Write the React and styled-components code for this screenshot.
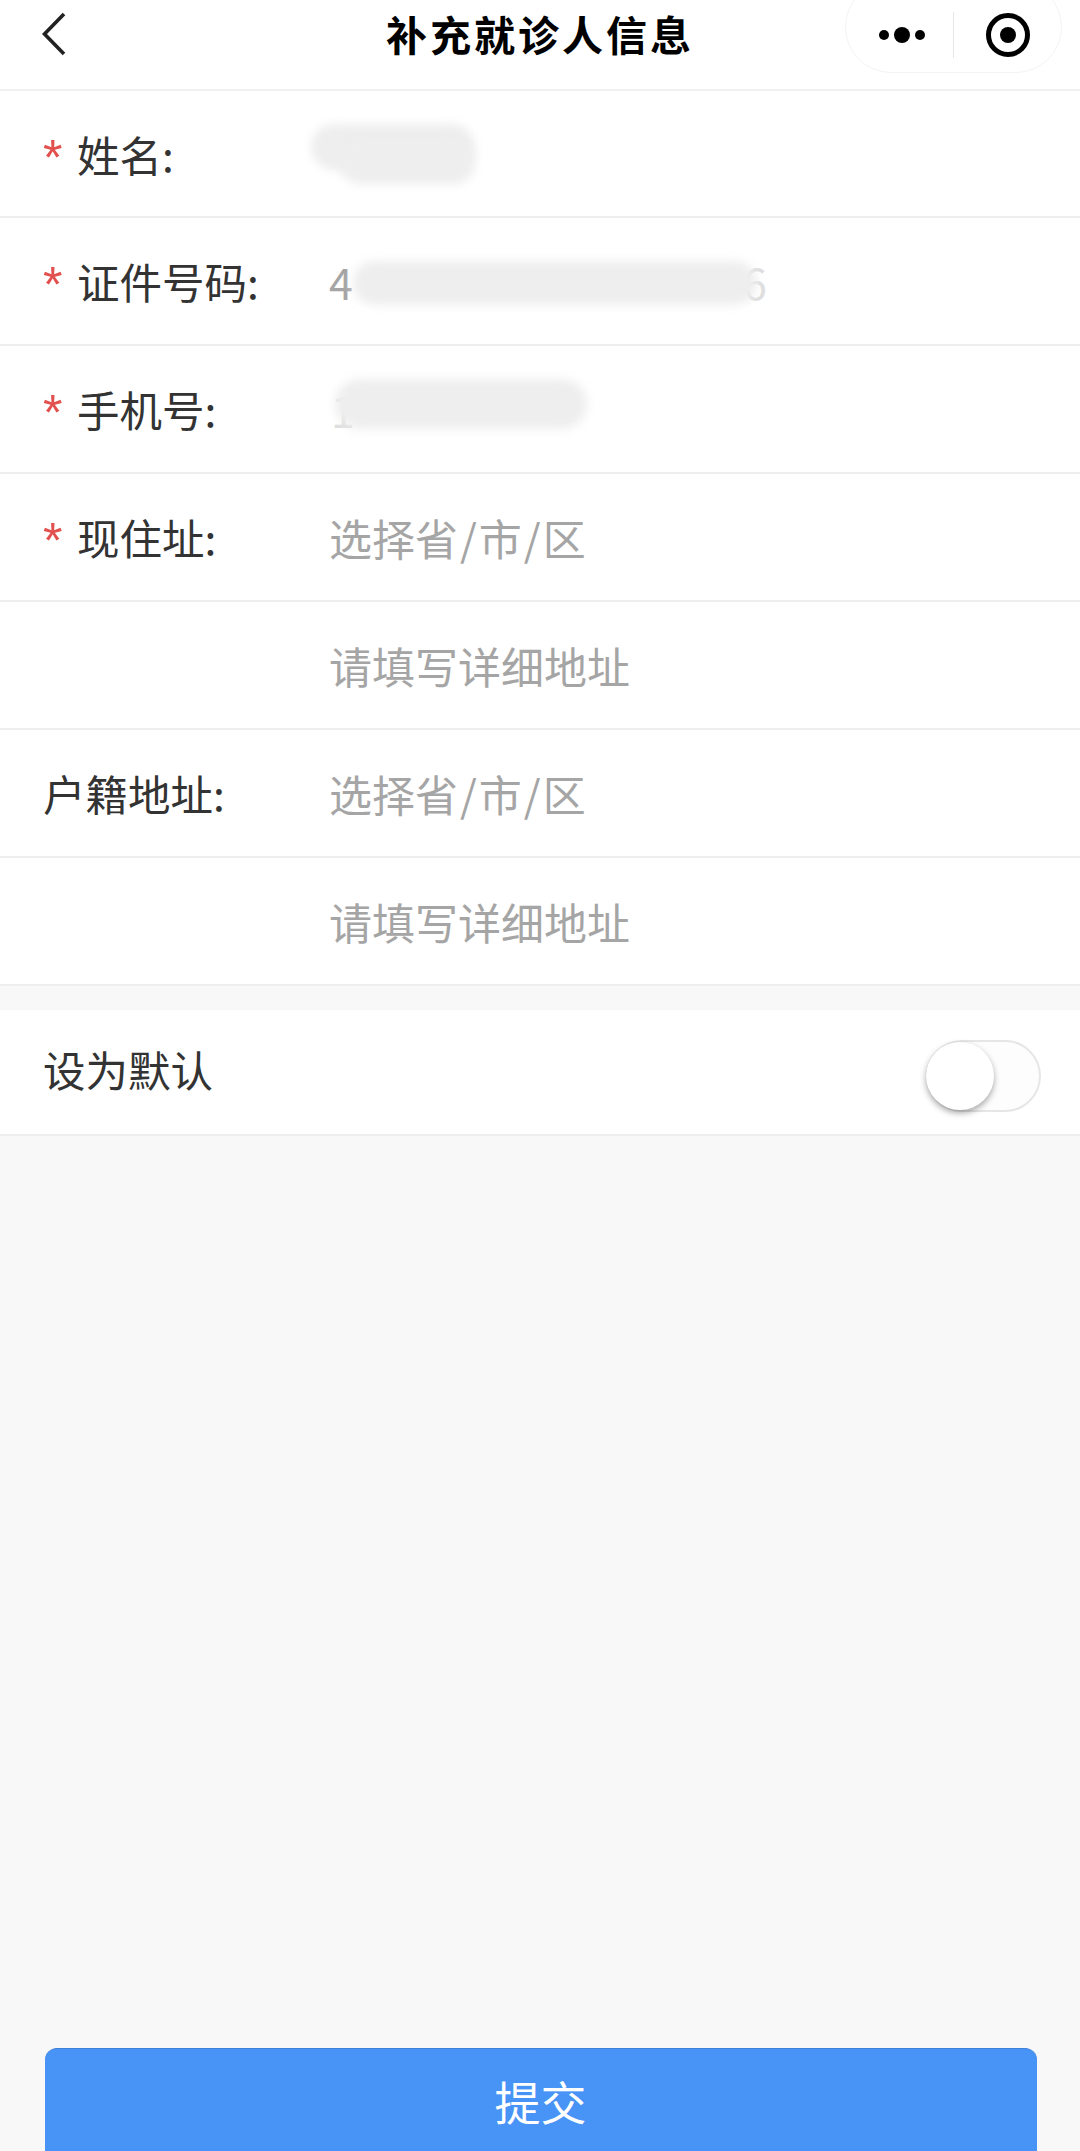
import styled, { createGlobalStyle } from "styled-components"

const GlobalStyle = createGlobalStyle`
  html, body {
    margin: 0;
    padding: 0;
    background: #f8f8f8;
  }
  * {
    box-sizing: border-box;
  }
`

const Page = styled.div`
  width: 1080px;
  height: 2151px;
  overflow: hidden;
  display: flex;
  flex-direction: column;
  background: #f8f8f8;
  font-family: "Liberation Sans", "Noto Sans CJK SC", sans-serif;
`

const NavBar = styled.div`
  height: 91px;
  flex: none;
  position: relative;
  display: flex;
  align-items: center;
  justify-content: center;
  background: #fff;
  border-bottom: 2px solid #f0f0f0;
`

const BackIcon = styled.svg`
  position: absolute;
  left: 36px;
  top: 8px;
`

const NavTitle = styled.div`
  font-family: "Noto Sans CJK SC", sans-serif;
  font-size: 41px;
  font-weight: 700;
  letter-spacing: 3px;
  color: #000;
  line-height: 60px;
  padding-bottom: 24px;
`

const Capsule = styled.div`
  position: absolute;
  left: 845px;
  top: -19px;
  width: 217px;
  height: 92px;
  border-radius: 46px;
  border: 1px solid #f3f3f3;
  background: #fff;
  display: flex;
  align-items: center;
  padding-top: 15px;
`

const CapsuleIcon = styled.svg`
  display: block;
  flex: none;
`

const CapsuleDivider = styled.div`
  width: 1px;
  height: 46px;
  flex: none;
  background: #e6e6e6;
`

const FormSection = styled.div`
  background: #fff;
  flex: none;
`

const Row = styled.div`
  height: ${(p) => p.$height || 128}px;
  display: flex;
  align-items: center;
  padding-left: 43px;
  border-bottom: 2px solid #eeeeee;
`

const Label = styled.div`
  width: 286px;
  flex: none;
  display: flex;
  align-items: center;
  font-family: "Noto Sans CJK SC", sans-serif;
  font-size: 42.5px;
  color: #333;
  line-height: 60px;
`

const Star = styled.span`
  width: 34px;
  flex: none;
  font-family: "Liberation Sans", sans-serif;
  font-size: 50px;
  line-height: 60px;
  padding-top: 8px;
  color: #e2504e;
`

const Value = styled.div`
  position: relative;
  flex: 1;
  height: 60px;
  font-family: "Noto Sans CJK SC", sans-serif;
  font-size: 43px;
  line-height: 60px;
  color: #a5a5a5;
`

const Slash = styled.span`
  margin: 0 2px;
`

const Redaction = styled.div`
  position: absolute;
  left: ${(p) => p.$left}px;
  top: ${(p) => p.$top}px;
  width: ${(p) => p.$width}px;
  height: ${(p) => p.$height}px;
  border-radius: ${(p) => p.$height / 2}px;
  background: #eeeeee;
  filter: blur(5px);
`

// digit left showing at the edge of a redaction
const GhostDigit = styled.span`
  position: absolute;
  left: ${(p) => p.$left}px;
  top: 0;
  color: #dedede;
`

const Gap = styled.div`
  height: 24px;
  flex: none;
`

const SwitchLabel = styled.div`
  font-family: "Noto Sans CJK SC", sans-serif;
  font-size: 42.5px;
  color: #333;
  line-height: 60px;
  flex: 1;
  padding-bottom: 6px;
`

const Switch = styled.div`
  position: relative;
  width: 115px;
  height: 72px;
  margin-right: 39px;
  margin-top: 8px;
  border-radius: 36px;
  border: 2px solid #e6e6e6;
  background: #fdfdfd;
`

const Knob = styled.div`
  position: absolute;
  left: -2px;
  top: 0;
  width: 68px;
  height: 68px;
  border-radius: 50%;
  background: #fff;
  box-shadow: 0 3px 6px rgba(0, 0, 0, 0.35);
`

const Spacer = styled.div`
  flex: 1;
`

const SubmitButton = styled.button`
  flex: none;
  align-self: center;
  width: 992px;
  height: 103px;
  margin-left: 1px;
  padding: 0;
  border: none;
  border-top: 1px solid #3f80d8;
  border-radius: 12px 12px 0 0;
  background: #4893f6;
  color: #fff;
  font-family: "Noto Sans CJK SC", sans-serif;
  font-size: 46px;
  line-height: 60px;
`

const region = (
  <>
    选择省<Slash>/</Slash>市<Slash>/</Slash>区
  </>
)

const rows = [
  {
    label: "姓名:",
    required: true,
    height: 127,
    blobs: [
      { left: -18, top: 0, width: 164, height: 46 },
      { left: 10, top: 18, width: 136, height: 42 },
    ],
  },
  {
    label: "证件号码:",
    required: true,
    value: "4",
    ghost: { digit: "6", left: 414 },
    blobs: [{ left: 24, top: 10, width: 404, height: 44 }],
  },
  {
    label: "手机号:",
    required: true,
    ghost: { digit: "1", left: 2 },
    blobs: [{ left: 6, top: 0, width: 252, height: 50 }],
  },
  { label: "现住址:", required: true, value: region },
  { value: "请填写详细地址" },
  { label: "户籍地址:", value: region },
  { value: "请填写详细地址" },
]

function App() {
  return (
    <Page>
      <GlobalStyle />
      <NavBar>
        <BackIcon width="36" height="56" viewBox="0 0 36 56" fill="none">
          <path d="M28 6L8.5 26L28 46" stroke="#222" strokeWidth="3.6" />
        </BackIcon>
        <NavTitle>补充就诊人信息</NavTitle>
        <Capsule>
          <CapsuleIcon width="107" height="40" viewBox="0 0 107 40">
            <circle cx="38" cy="20" r="5" fill="#000" />
            <circle cx="56" cy="20" r="8" fill="#000" />
            <circle cx="74" cy="20" r="5" fill="#000" />
          </CapsuleIcon>
          <CapsuleDivider />
          <CapsuleIcon width="108" height="56" viewBox="0 0 108 56">
            <circle cx="54" cy="28" r="19.5" fill="none" stroke="#000" strokeWidth="5" />
            <circle cx="54" cy="28" r="8" fill="#000" />
          </CapsuleIcon>
        </Capsule>
      </NavBar>

      <FormSection>
        {rows.map((row, i) => (
          <Row key={i} $height={row.height}>
            <Label>
              {row.required && <Star>*</Star>}
              {row.label}
            </Label>
            <Value>
              {row.value}
              {row.ghost && <GhostDigit $left={row.ghost.left}>{row.ghost.digit}</GhostDigit>}
              {row.blobs && row.blobs.map((b, j) => (
                <Redaction key={j} $left={b.left} $top={b.top} $width={b.width} $height={b.height} />
              ))}
            </Value>
          </Row>
        ))}
      </FormSection>

      <Gap />

      <FormSection>
        <Row $height={126}>
          <SwitchLabel>设为默认</SwitchLabel>
          <Switch>
            <Knob />
          </Switch>
        </Row>
      </FormSection>

      <Spacer />

      <SubmitButton>提交</SubmitButton>
    </Page>
  )
}

export default App
